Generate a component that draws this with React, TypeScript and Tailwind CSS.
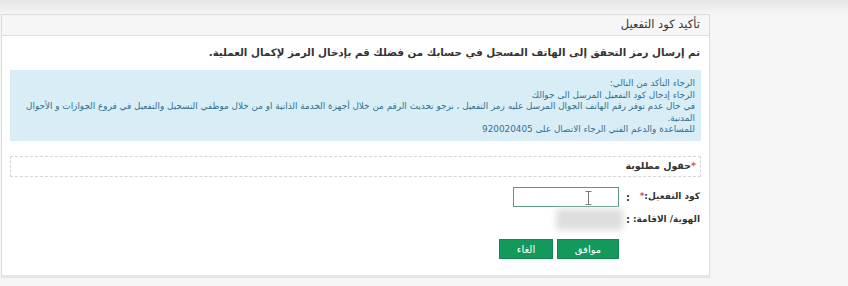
import React from 'react';

const font = { fontFamily: '"DejaVu Sans", "Noto Sans", sans-serif' };

export default function App() {
  return (
    <div
      dir="rtl"
      style={font}
      className="w-[848px] h-[286px] overflow-hidden bg-[linear-gradient(to_bottom,#e6e6e6,#f5f5f5_14px)] pt-[14px]"
    >
      <div className="mr-[138px] w-[709px] bg-white border border-[#dcdcdc] border-b-[3px] border-b-[#e6e6e6]">
        {/* header */}
        <div className="h-[21px] bg-[#f6f6f6] border-b border-[#dedede] px-[9px] flex items-center">
          <h1 className="text-[11.5px] leading-none text-[#333]">تأكيد كود التفعيل</h1>
        </div>

        <div className="px-[8px] pt-[9px] pb-[16px]">
          <p className="px-[1px] text-[10.3px] leading-[14px] font-bold text-[#333] whitespace-nowrap">
            تم إرسال رمز التحقق إلى الهاتف المسجل في حسابك من فضلك قم بإدخال الرمز لإكمال العملية.
          </p>

          <div className="mt-[11px] h-[71px] bg-[#d9edf7] text-[#31708f] px-[6px] pt-[8px] text-[8.85px] leading-[11.5px] whitespace-nowrap">
            <div>الرجاء التأكد من التالي:</div>
            <div>الرجاء إدخال كود التفعيل المرسل الى جوالك</div>
            <div>
              في حال عدم توفر رقم الهاتف الجوال المرسل عليه رمز التفعيل ، نرجو تحديث الرقم من خلال أجهزة الخدمة الذاتية او من خلال موظفي التسجيل والتفعيل في فروع الجوازات و الأحوال
            </div>
            <div>المدنية.</div>
            <div>للمساعدة والدعم الفني الرجاء الاتصال على 920020405</div>
          </div>

          <div className="mt-[15px] h-[21px] border border-dashed border-[#d5d5d5] px-[4px] flex items-center">
            <span className="text-[9.5px] font-bold text-[#333]">
              <span className="text-[#d9534f]">*</span>حقول مطلوبة
            </span>
          </div>

          <div className="mt-[10px] pr-[1px] flex flex-col gap-[2px]">
            <div className="flex items-center h-[20px]">
              <label className="w-[68px] shrink-0 text-[9px] font-bold text-[#333] whitespace-nowrap">
                كود التفعيل:<span className="text-[#d9534f]">*</span>
              </label>
              <span className="w-[8px] text-center text-[10px] font-bold text-[#333]">:</span>
              <div className="relative mr-[5px] w-[106px] h-[20px] border border-[#5a9a86] bg-white">
                <svg className="absolute left-[71px] top-[3px]" width="7" height="14" viewBox="0 0 7 14">
                  <path d="M0.5 0.5h6M3.5 0.5v13M0.5 13.5h6" stroke="#777" strokeWidth="1" fill="none" />
                </svg>
              </div>
            </div>
            <div className="flex items-center h-[21px]">
              <label className="w-[68px] shrink-0 text-[9px] font-bold text-[#333] whitespace-nowrap">
                الهوية/ الاقامة:
              </label>
              <span className="w-[8px] text-center text-[10px] font-bold text-[#333]">:</span>
              <div className="mr-[1px] w-[67px] h-[21px] bg-[#dedede] blur-[3px]" />
            </div>
          </div>

          <div className="mt-[9px] mr-[82px] flex gap-[4px]">
            <button className="w-[62px] h-[20px] bg-[#13995b] border border-[#0e8a50] text-white text-[10px]">
              موافق
            </button>
            <button className="w-[54px] h-[20px] bg-[#13995b] border border-[#0e8a50] text-white text-[10px]">
              الغاء
            </button>
          </div>
        </div>
      </div>
    </div>
  );
}
